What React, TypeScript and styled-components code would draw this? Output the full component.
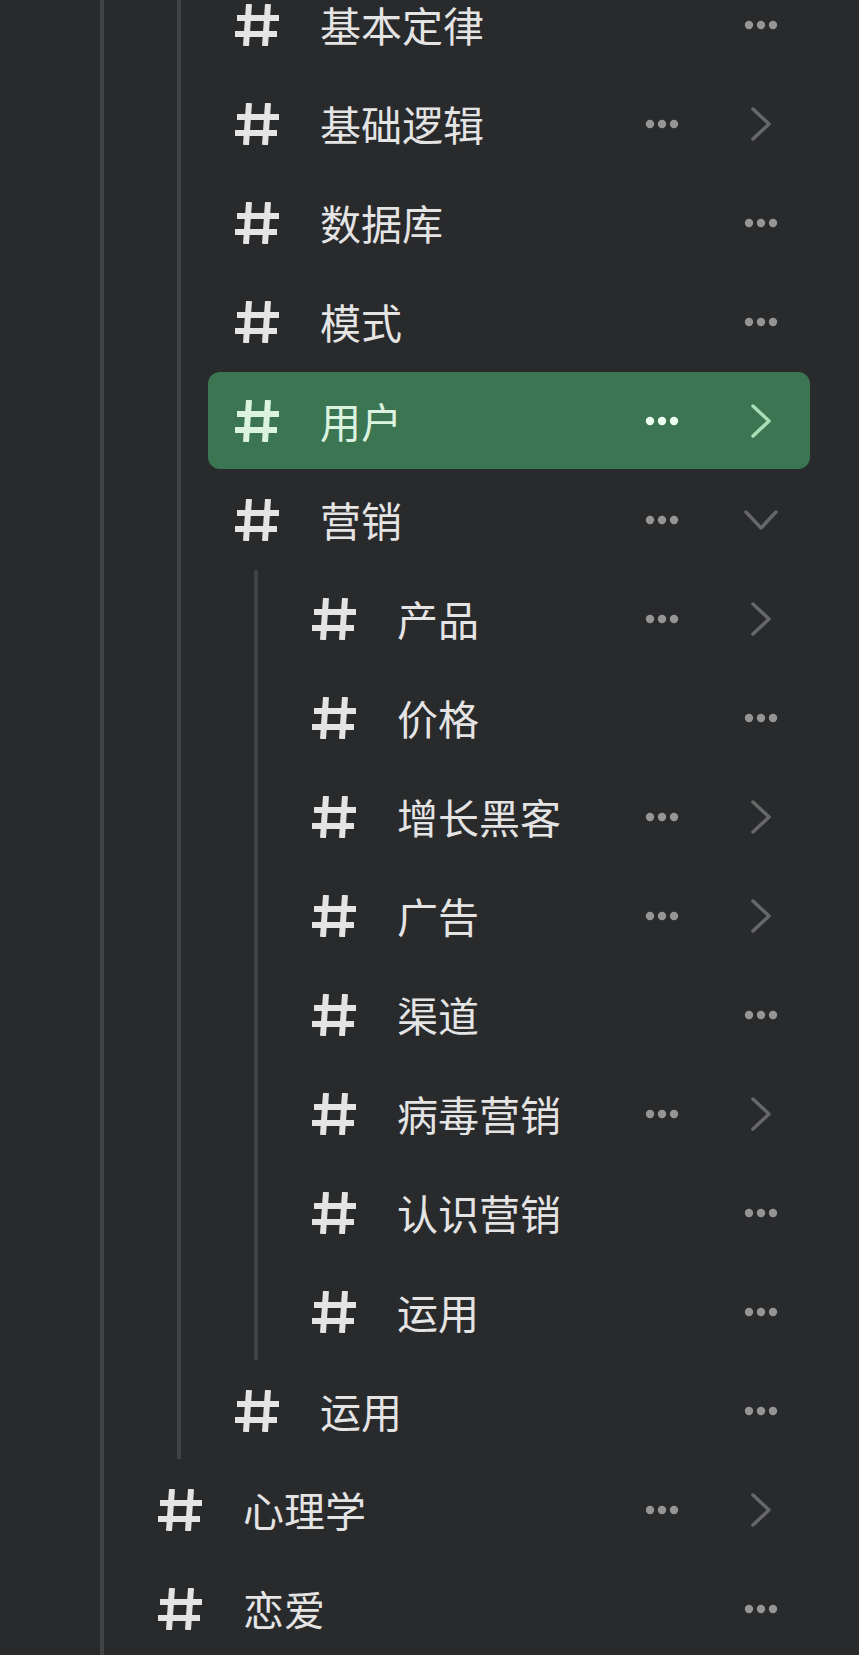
import React from 'react';
import styled, { createGlobalStyle } from 'styled-components';

type Topic = {
  title: string;
  arrow?: 'right' | 'down';
  active?: boolean;
  children?: Topic[];
};

// first visible level; the parent header sits above the scroll position
const nested: Topic[] = [
  { title: '基本定律' },
  { title: '基础逻辑', arrow: 'right' },
  { title: '数据库' },
  { title: '模式' },
  { title: '用户', arrow: 'right', active: true },
  {
    title: '营销',
    arrow: 'down',
    children: [
      { title: '产品', arrow: 'right' },
      { title: '价格' },
      { title: '增长黑客', arrow: 'right' },
      { title: '广告', arrow: 'right' },
      { title: '渠道' },
      { title: '病毒营销', arrow: 'right' },
      { title: '认识营销' },
      { title: '运用' },
    ],
  },
  { title: '运用' },
];

const roots: Topic[] = [{ title: '心理学', arrow: 'right' }, { title: '恋爱' }];

const GlobalStyle = createGlobalStyle`
  html, body {
    margin: 0;
    padding: 0;
    background: #292a2c;
    overflow: hidden;
  }
  body {
    font-family: "Noto Sans CJK SC", "Noto Sans", sans-serif;
  }
`;

const Page = styled.div`
  height: 100vh;
  overflow: hidden;
  padding-right: 49px;
`;

const Scroller = styled.div`
  margin-top: -24px;
`;

const Branch = styled.div<{ $offset: number }>`
  display: flex;
  flex-direction: column;
  gap: 2px;
  margin-left: ${p => p.$offset}px;
  padding-left: 27px;
  border-left: 4px solid #424345;
`;

const Row = styled.div<{ $active?: boolean }>`
  display: flex;
  align-items: center;
  height: 97px;
  padding: 0 32px 0 27px;
  border-radius: 12px;
  background: ${p => (p.$active ? '#3b7552' : 'transparent')};
  color: ${p => (p.$active ? '#dcf3e0' : '#e4e4e4')};
`;

const HashIcon = styled.svg`
  flex: none;
  width: 44px;
  height: 42px;
  margin-right: 41px;
`;

const Label = styled.span`
  flex: 1;
  font-size: 41px;
  font-weight: 400;
  line-height: 1;
  white-space: nowrap;
`;

const Actions = styled.div`
  display: flex;
  align-items: center;
  gap: 65px;
`;

const Slot = styled.div`
  width: 34px;
  display: flex;
  align-items: center;
  justify-content: center;
`;

const Dots = styled.svg<{ $active?: boolean }>`
  width: 34px;
  height: 10px;
  fill: ${p => (p.$active ? '#effff1' : '#959595')};
`;

const Chevron = styled.svg<{ $active?: boolean }>`
  fill: none;
  stroke: ${p => (p.$active ? '#a9ddb4' : '#666768')};
  stroke-width: 3.5;
  stroke-linecap: round;
  stroke-linejoin: round;
`;

function Hash() {
  return (
    <HashIcon viewBox="0 0 44 42" fill="none" stroke="currentColor" strokeWidth={6}>
      <path d="M14 0 L11 42 M33 0 L30 42 M2 14 H44 M0 30 H42" />
    </HashIcon>
  );
}

function More({ active }: { active?: boolean }) {
  return (
    <Dots $active={active} viewBox="0 0 34 10">
      <circle cx="5" cy="5" r="4.2" />
      <circle cx="17" cy="5" r="4.2" />
      <circle cx="29" cy="5" r="4.2" />
    </Dots>
  );
}

function Arrow({ dir, active }: { dir: 'right' | 'down'; active?: boolean }) {
  if (dir === 'down') {
    return (
      <Chevron $active={active} width={34} height={20} viewBox="0 0 34 20">
        <polyline points="2,2 17,18 32,2" />
      </Chevron>
    );
  }
  return (
    <Chevron $active={active} width={20} height={34} viewBox="0 0 20 34">
      <polyline points="2,2 18,17 2,32" />
    </Chevron>
  );
}

function TopicRow({ topic }: { topic: Topic }) {
  return (
    <Row $active={topic.active}>
      <Hash />
      <Label>{topic.title}</Label>
      <Actions>
        {topic.arrow ? (
          <>
            <Slot>
              <More active={topic.active} />
            </Slot>
            <Slot>
              <Arrow dir={topic.arrow} active={topic.active} />
            </Slot>
          </>
        ) : (
          <Slot>
            <More active={topic.active} />
          </Slot>
        )}
      </Actions>
    </Row>
  );
}

function TopicList({ items }: { items: Topic[] }) {
  return (
    <>
      {items.map((t, i) => (
        <React.Fragment key={t.title + i}>
          <TopicRow topic={t} />
          {t.children && (
            <Branch $offset={46}>
              <TopicList items={t.children} />
            </Branch>
          )}
        </React.Fragment>
      ))}
    </>
  );
}

export default function App() {
  return (
    <Page>
      <GlobalStyle />
      <Scroller>
        <Branch $offset={100}>
          <Branch $offset={46}>
            <TopicList items={nested} />
          </Branch>
          <TopicList items={roots} />
        </Branch>
      </Scroller>
    </Page>
  );
}
